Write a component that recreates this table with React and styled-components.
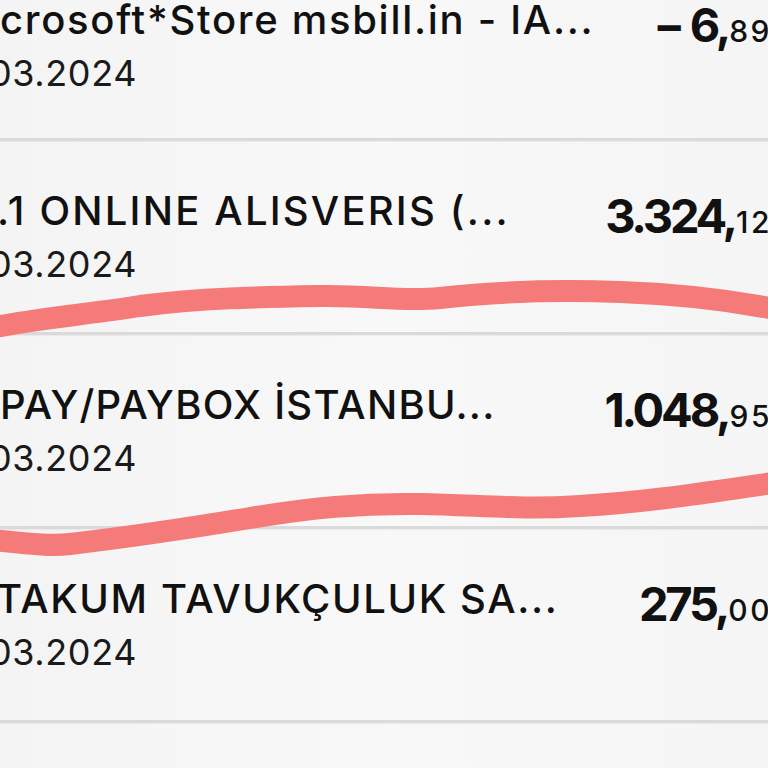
import React from "react";
import styled, { createGlobalStyle } from "styled-components";

const Global = createGlobalStyle`
  html, body { margin: 0; padding: 0; }
  body {
    background: #f6f6f6;
    overflow: hidden;
    width: 768px;
    height: 768px;
    font-family: Inter, "Noto Sans", sans-serif;
    color: #111;
  }
`;

const Screen = styled.div`
  position: relative;
  width: 768px;
  height: 768px;
  overflow: hidden;
  background: linear-gradient(90deg, #f4f4f4 0%, #f8f8f8 50%, #f5f5f5 100%);
`;

const List = styled.div`
  width: 772px;
  margin-top: -50px;
  display: flex;
  flex-direction: column;
`;

const Row = styled.div`
  box-sizing: border-box;
  height: ${(p) => p.$h || 194}px;
  border-bottom: 3px solid #dadada;
  box-shadow: 0 1px 1px rgba(0, 0, 0, 0.04);
  display: flex;
  justify-content: space-between;
  align-items: flex-start;
  padding-top: 46px;
`;

const Info = styled.div`
  display: flex;
  flex-direction: column;
  min-width: 0;
`;

const Title = styled.div`
  font-size: 40px;
  line-height: 48px;
  font-weight: 500;
  letter-spacing: ${(p) => p.$ls}px;
  white-space: nowrap;
  margin-left: ${(p) => p.$indent || 0}px;
  color: #111;
`;

const DateText = styled.div`
  margin-top: 8px;
  margin-left: -11px;
  font-size: 36px;
  line-height: 42px;
  font-weight: 400;
  letter-spacing: 0.6px;
  color: #1a1a1a;
`;

const Amount = styled.div`
  white-space: nowrap;
  color: #111;
  line-height: 58px;
`;

const Whole = styled.span`
  font-size: 47px;
  font-weight: 700;
  letter-spacing: -3.2px;
`;

const Cents = styled.span`
  font-size: 30px;
  font-weight: 500;
  letter-spacing: 2.5px;
  margin-left: 1px;
`;

const Strokes = styled.svg`
  position: absolute;
  left: 0;
  top: 0;
  pointer-events: none;
`;

const rows = [
  { title: "crosoft*Store msbill.in - IA...", whole: "− 6,", cents: "89", ls: 1.7 },
  { title: ".1 ONLINE ALISVERIS (...", whole: "3.324,", cents: "12", indent: -3, ls: 2.2 },
  { title: "PAY/PAYBOX İSTANBU...", whole: "1.048,", cents: "95", ls: 1.25 },
  { title: "TAKUM TAVUKÇULUK SA...", whole: "275,", cents: "00", indent: -4, ls: 1.6 },
  { title: "", whole: "", cents: "" },
];

export default function App() {
  return (
    <>
      <Global />
      <Screen>
        <List>
          {rows.map((r, i) => (
            <Row key={i} $h={i === 0 ? 191 : 194}>
              <Info>
                <Title $indent={r.indent} $ls={r.ls}>{r.title}</Title>
                {r.title && <DateText>03.2024</DateText>}
              </Info>
              <Amount>
                <Whole>{r.whole}</Whole>
                <Cents>{r.cents}</Cents>
              </Amount>
            </Row>
          ))}
        </List>
        <Strokes width="768" height="768" viewBox="0 0 768 768">
          <path
            d="M -10 328 C 40 318, 90 314, 140 306 C 200 298, 260 297, 320 296 C 370 295, 400 302, 440 298 C 500 291, 560 290, 620 292 C 680 294, 730 300, 780 310"
            fill="none"
            stroke="#f47b79"
            strokeWidth="22"
            strokeLinecap="round"
          />
          <path
            d="M -10 540 C 20 542, 45 547, 70 544 C 130 537, 190 528, 250 518 C 310 508, 360 503, 420 504 C 480 505, 520 510, 580 506 C 650 502, 710 492, 780 482"
            fill="none"
            stroke="#f47b79"
            strokeWidth="22"
            strokeLinecap="round"
          />
        </Strokes>
      </Screen>
    </>
  );
}
